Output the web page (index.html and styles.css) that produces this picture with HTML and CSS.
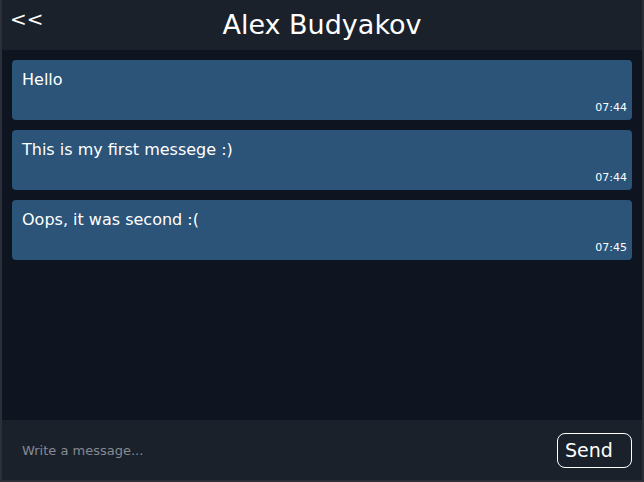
FILE: index.html
```html
<!DOCTYPE html>
<html>
<head>
<meta charset="utf-8">
<link rel="stylesheet" href="styles.css">
</head>
<body>
<div class="app">
  <header class="header">
    <span class="back">&lt;&lt;</span>
    <h1 class="title">Alex Budyakov</h1>
    <span class="spacer"></span>
  </header>
  <main class="messages">
    <div class="bubble">
      <div class="text">Hello</div>
      <div class="time">07:44</div>
    </div>
    <div class="bubble">
      <div class="text">This is my first messege :)</div>
      <div class="time">07:44</div>
    </div>
    <div class="bubble">
      <div class="text">Oops, it was second :(</div>
      <div class="time">07:45</div>
    </div>
  </main>
  <footer class="composer">
    <input class="input" type="text" placeholder="Write a message...">
    <button class="send">Send</button>
  </footer>
</div>
</body>
</html>
```
FILE: styles.css
```css
html, body {
  margin: 0;
  padding: 0;
  background: #2a2f38;
}
body {
  font-family: "DejaVu Sans", sans-serif;
  color: #ffffff;
}
.app {
  width: 640px;
  height: 480px;
  border: 2px solid #2a2f38;
  border-top: 0;
  display: flex;
  flex-direction: column;
  background: #0f1520;
}
.header {
  height: 50px;
  flex: none;
  background: #1a212b;
  display: grid;
  grid-template-columns: 1fr auto 1fr;
  align-items: start;
}
.back {
  font-size: 20px;
  line-height: 24px;
  padding: 7px 0 0 8px;
}
.title {
  margin: 0;
  font-size: 27px;
  font-weight: normal;
  line-height: 50px;
}
.messages {
  flex: 1;
  padding: 10px;
  display: flex;
  flex-direction: column;
  gap: 10px;
}
.bubble {
  background: #2c5378;
  border-radius: 4px;
  min-height: 60px;
  box-sizing: border-box;
  padding: 10px 5px 6px 10px;
  display: flex;
  flex-direction: column;
}
.text {
  font-size: 16px;
  line-height: 19px;
}
.time {
  margin-top: auto;
  align-self: flex-end;
  font-size: 11px;
  line-height: 13px;
}
.composer {
  height: 60px;
  flex: none;
  background: #1a212b;
  display: flex;
  align-items: center;
  padding: 0 10px 0 20px;
  gap: 10px;
}
.input {
  flex: 1;
  background: transparent;
  border: 0;
  outline: none;
  font-family: "DejaVu Sans", sans-serif;
  font-size: 13px;
  color: #ffffff;
  padding: 0;
}
.input::placeholder {
  color: #868b93;
}
.send {
  width: 75px;
  height: 35px;
  background: transparent;
  border: 1px solid #ffffff;
  border-radius: 8px;
  color: #ffffff;
  font-family: "DejaVu Sans", sans-serif;
  font-size: 19px;
  text-align: left;
  padding: 0 0 0 7px;
}
```
